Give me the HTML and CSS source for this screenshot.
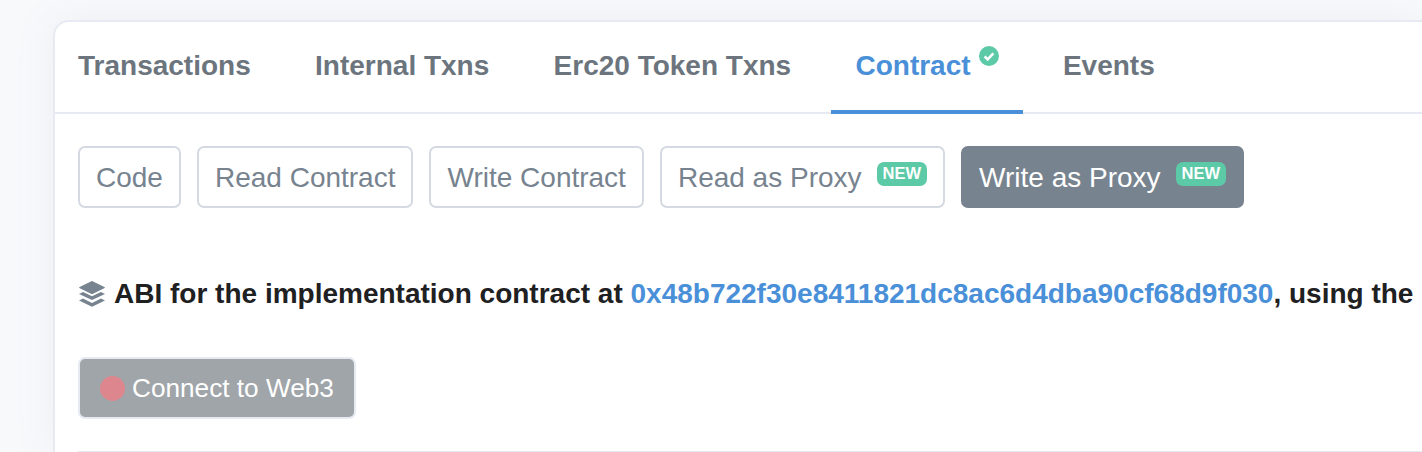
FILE: index.html
```html
<!DOCTYPE html>
<html lang="en">
<head>
<meta charset="utf-8">
<title>Contract</title>
<link rel="stylesheet" href="styles.css">
</head>
<body>
<main class="card">
  <nav class="tabs">
    <a class="tab">Transactions</a>
    <a class="tab">Internal Txns</a>
    <a class="tab">Erc20 Token Txns</a>
    <a class="tab active">Contract<svg class="check" viewBox="0 0 20 20"><circle cx="10" cy="10" r="10" fill="#5cc9a7"/><path d="M5.6 10.4l3 3 5.8-6" fill="none" stroke="#fff" stroke-width="2.6"/></svg></a>
    <a class="tab">Events</a>
  </nav>
  <section class="body">
    <div class="pills">
      <a class="pill">Code</a>
      <a class="pill">Read Contract</a>
      <a class="pill">Write Contract</a>
      <a class="pill">Read as Proxy<span class="new">NEW</span></a>
      <a class="pill on">Write as Proxy<span class="new">NEW</span></a>
    </div>
    <p class="abi"><svg class="layers" viewBox="0 0 28 28"><path d="M14 1.5L26.5 7.6 14 13.7 1.5 7.6z" fill="#77838f" stroke="#77838f" stroke-linejoin="round"/><path d="M5 12L14 16.3 23 12l4 1.9-13 6.2-13-6.2z" fill="#77838f"/><path d="M5 18.6L14 22.9l9-4.3 4 1.9-13 6.2-13-6.2z" fill="#77838f"/></svg>ABI for the implementation contract at <a class="addr">0x48b722f30e8411821dc8ac6d4dba90cf68d9f030</a>, using the</p>
    <button class="connect" type="button"><span class="dot"></span>Connect to Web3</button>
    <div class="rule"></div>
  </section>
</main>
</body>
</html>
```
FILE: styles.css
```css
html, body { margin: 0; height: 452px; overflow: hidden; }
body {
  background: #f8f9fb;
  font-family: "Liberation Sans", Arial, sans-serif;
  padding: 20px 0 0 53px;
  box-sizing: border-box;
  width: 1422px;
}
.card {
  width: 1369px;
  height: 432px;
  overflow: hidden;
  background: #fff;
  border: solid #e7eaf3;
  border-width: 2px 0 0 2px;
  border-radius: 16px 0 0 0;
  box-sizing: border-box;
  box-shadow: 0 0 40px rgba(140, 152, 164, .10);
}
.tabs {
  display: flex;
  gap: 16.3px;
  height: 92px;
  box-sizing: border-box;
  padding-left: 0;
  margin-left: -1px;
  border-bottom: 2px solid #e7eaf3;
}
.tab {
  display: flex;
  align-items: flex-start;
  height: 90px;
  padding: 27px 24px 0;
  box-sizing: border-box;
  font-size: 28px;
  line-height: 34px;
  font-weight: 700;
  color: #6c757e;
}
.active { color: #4a90d9; border-bottom: 4px solid #4a90d9; height: 92px; }
.check { width: 20px; height: 20px; margin: -3px 0 0 8px; }
.body { padding: 32px 0 0 23px; }
.pills { display: flex; gap: 16px; }
.pill {
  display: flex;
  align-items: flex-start;
  height: 62px;
  box-sizing: border-box;
  padding: 13px 16px 0;
  border: 2px solid #d5dae2;
  border-radius: 7px;
  font-size: 28px;
  line-height: 34px;
  color: #77838f;
}
.on { background: #77838f; border-color: #77838f; color: #fff; }
.new {
  display: block;
  margin: 1px 0 0 15px;
  padding: 0 6px;
  height: 24px;
  line-height: 22px;
  border-radius: 7px;
  background: #5cc9a7;
  color: #fff;
  font-size: 16.5px;
  font-weight: 700;
}
.abi {
  display: flex;
  align-items: center;
  margin: 68px 0 0;
  height: 36px;
  font-size: 28px;
  font-weight: 700;
  color: #1e2022;
  white-space: pre;
}
.layers { width: 28px; height: 28px; margin-right: 8px; }
.addr { color: #4a90d9; }
.connect {
  display: flex;
  align-items: center;
  margin-top: 45px;
  width: 278px;
  height: 62px;
  padding: 0 0 0 20px;
  box-sizing: border-box;
  background: #a0a5a9;
  border: 2px solid #e7eaf3;
  border-radius: 7px;
  color: #fff;
  font: 400 26.2px "Liberation Sans", Arial, sans-serif;
}
.dot {
  width: 25px;
  height: 25px;
  border-radius: 50%;
  background: #de868d;
  margin-right: 7px;
}
.rule { margin-top: 32px; height: 2px; background: #e7eaf3; }
```
